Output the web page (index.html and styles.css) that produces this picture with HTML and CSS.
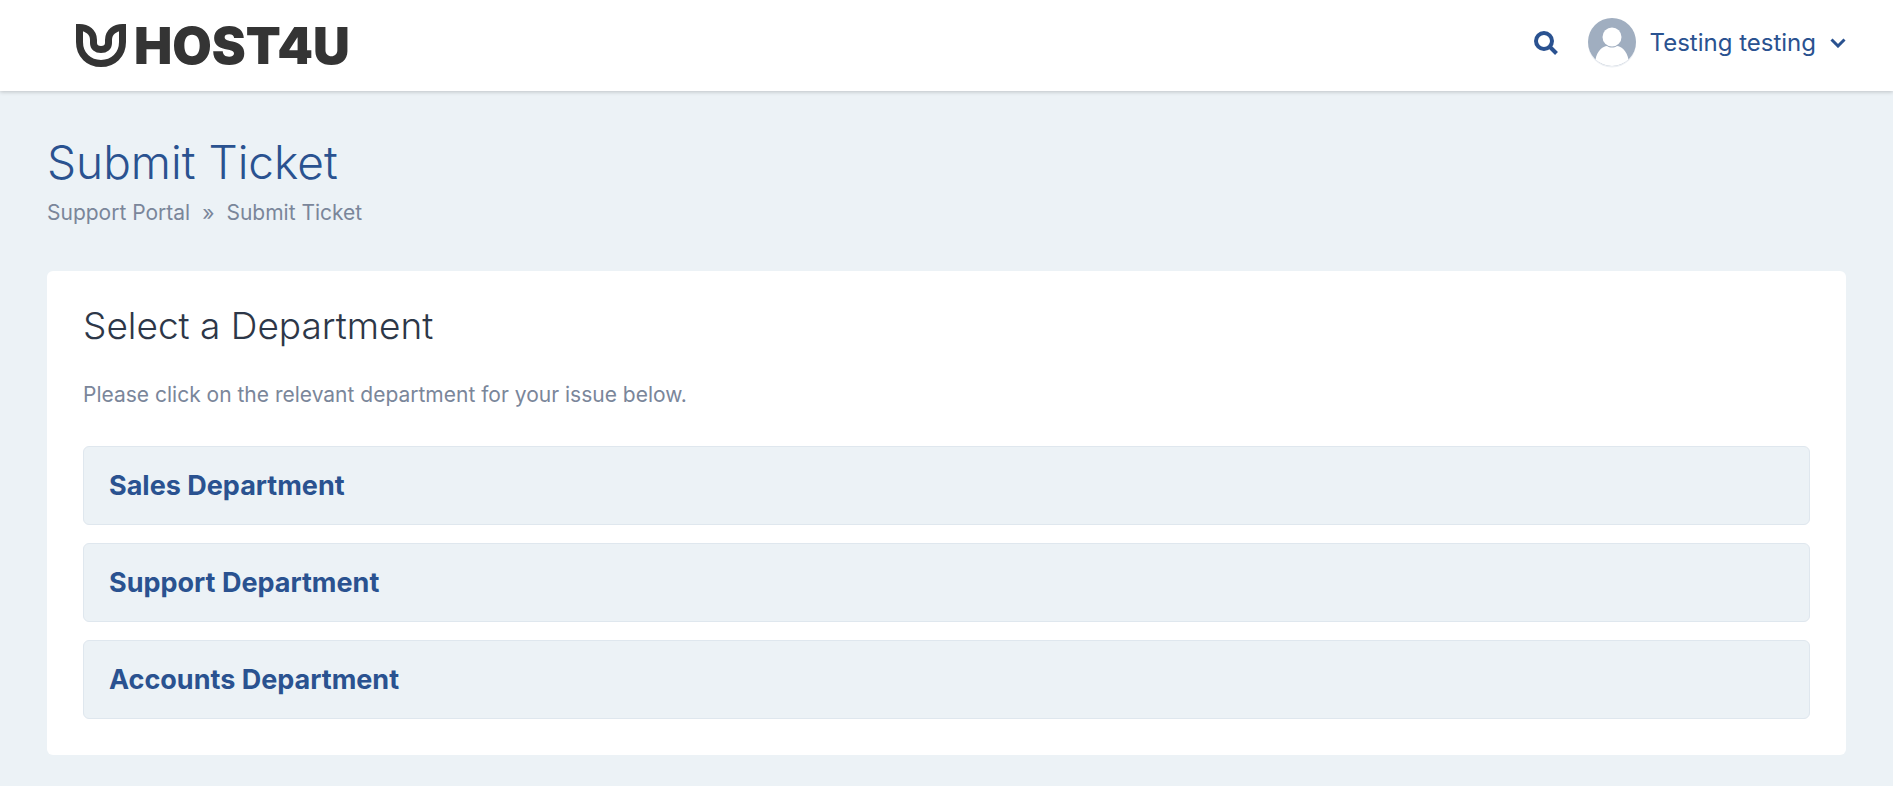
FILE: index.html
```html
<!DOCTYPE html>
<html lang="en">
<head>
  <meta charset="UTF-8" />
  <meta name="viewport" content="width=device-width, initial-scale=1" />
  <title>Submit Ticket</title>
  <link rel="stylesheet" href="styles.css">
</head>
<body>
  <header class="header">
    <a class="logo" href="#">
      <svg class="logo-mark" viewBox="0 0 50 44" aria-hidden="true">
        <path d="M3.500 3.500C11 3.500 17.500 8 17.500 16V19C17.500 23 20.500 25.500 25 25.500S32.500 23 32.500 19V16C32.500 8 39 3.500 46.500 3.500V18C46.500 31 37 39.500 25 39.500S3.500 31 3.500 18Z" />
      </svg>
      <span>HOST4U</span>
    </a>
    <div class="header-right">
      <button class="search-btn" type="button" aria-label="Search">
        <svg viewBox="0 0 24 24"><circle cx="10" cy="10" r="8" /><path d="M15.500 15.500L22.500 22.500" /></svg>
      </button>
      <button class="user-menu" type="button">
        <svg class="avatar" viewBox="0 0 48 50" aria-hidden="true">
          <circle class="avatar-ring" cx="24" cy="25.500" r="24" />
          <circle class="avatar-bg" cx="24" cy="24" r="24" />
          <circle class="avatar-fg" cx="24" cy="19" r="9.500" />
          <path class="avatar-fg" d="M7.500 41.500C9 33 15 28 19 28C22 30 26 30 29 28C33 28 39 33 40.500 41.500A24 24 0 0 1 7.500 41.500Z" />
        </svg>
        <span>Testing testing</span>
        <svg class="caret" viewBox="0 0 16 10" aria-hidden="true"><path d="M1.500 1.500L8 8L14.500 1.500" /></svg>
      </button>
    </div>
  </header>

  <main class="container">
    <h1>Submit Ticket</h1>
    <nav class="breadcrumb" aria-label="Breadcrumb">
      <a href="#">Support Portal</a>
      <span>&raquo;</span>
      <a href="#">Submit Ticket</a>
    </nav>

    <section class="card">
      <h2>Select a Department</h2>
      <p>Please click on the relevant department for your issue below.</p>
      <ul class="departments">
        <li><a href="#">Sales Department</a></li>
        <li><a href="#">Support Department</a></li>
        <li><a href="#">Accounts Department</a></li>
      </ul>
    </section>
  </main>
</body>
</html>
```

FILE: styles.css
```css
* {
  box-sizing: border-box;
}
body {
  margin: 0;
  font-family: 'Inter', sans-serif;
  font-size: 21px;
  line-height: 30px;
  color: #7a869a;
  background-color: #ecf2f6;
}
a {
  color: inherit;
  text-decoration: none;
}
button {
  padding: 0;
  border: none;
  background: none;
  font: inherit;
  color: inherit;
  cursor: pointer;
}
svg {
  display: block;
  fill: none;
}
.header {
  display: flex;
  justify-content: space-between;
  align-items: center;
  height: 91px;
  padding: 0 47px 0 76px;
  background-color: #fff;
  box-shadow: 0 1px 4px rgba(0, 0, 0, 0.2);
}
.logo {
  display: flex;
  align-items: center;
  gap: 8px;
  color: #343434;
  font-size: 51px;
  font-weight: 900;
  line-height: 60px;
}
.logo-mark {
  width: 50px;
  height: 44px;
  stroke: #343434;
  stroke-width: 7;
}
.header-right {
  display: flex;
  align-items: center;
  gap: 30px;
  padding-bottom: 5px;
  color: #2a5290;
}
.search-btn svg {
  width: 24px;
  height: 24px;
  stroke: currentColor;
  stroke-width: 4;
}
.user-menu {
  display: flex;
  align-items: center;
  gap: 14px;
  font-size: 24px;
}
.avatar {
  width: 48px;
  height: 50px;
}
.avatar-ring {
  fill: #edf0f4;
}
.avatar-bg {
  fill: #a0aec0;
}
.avatar-fg {
  fill: #fff;
}
.caret {
  width: 16px;
  height: 10px;
  stroke: currentColor;
  stroke-width: 3;
}
.container {
  padding: 44px 47px 31px;
}
h1 {
  margin: 0;
  font-size: 46px;
  font-weight: 300;
  line-height: 54px;
  color: #2a5290;
}
.breadcrumb {
  display: flex;
  gap: 12px;
  margin: 9px 0 43px;
}
.card {
  padding: 36px;
  border-radius: 6px;
  background-color: #fff;
}
h2 {
  margin: 0;
  font-size: 37px;
  font-weight: 300;
  line-height: 37px;
  color: #2d3748;
}
.card p {
  margin: 36px 0;
}
.departments {
  display: flex;
  flex-direction: column;
  gap: 18px;
  margin: 0;
  padding: 0;
  list-style: none;
}
.departments a {
  display: block;
  padding: 24px 25px;
  border: 1px solid #dfe7ee;
  border-radius: 6px;
  background-color: #ecf2f6;
  color: #2a5290;
  font-size: 27px;
  font-weight: 700;
  line-height: 29px;
}
.departments a:hover {
  border-color: #2a5290;
}
```
